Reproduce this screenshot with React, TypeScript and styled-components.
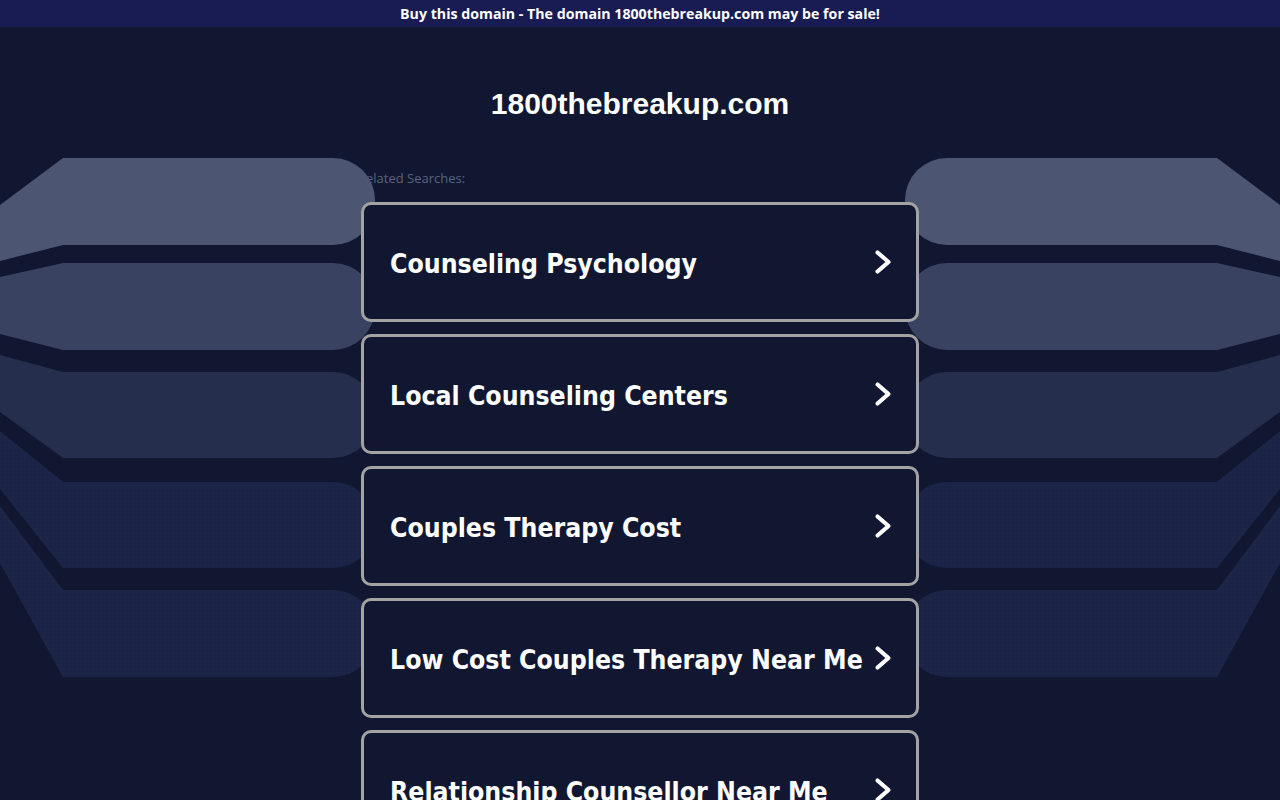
import React from 'react';
import styled, { createGlobalStyle } from 'styled-components';

const searches = [
  'Counseling Psychology',
  'Local Counseling Centers',
  'Couples Therapy Cost',
  'Low Cost Couples Therapy Near Me',
  'Relationship Counsellor Near Me',
];

type Band = {
  top: number;
  bottom: number;
  tipTop: number;
  tipBottom: number;
  fill: string;
};

const bands: Band[] = [
  { top: 158, bottom: 245, tipTop: 205, tipBottom: 261, fill: '#4c5673' },
  { top: 263, bottom: 350, tipTop: 277, tipBottom: 334, fill: '#3a4261' },
  { top: 372, bottom: 458, tipTop: 355, tipBottom: 412, fill: '#262e4d' },
  { top: 482, bottom: 568, tipTop: 431, tipBottom: 489, fill: 'url(#dots)' },
  { top: 590, bottom: 677, tipTop: 506, tipBottom: 563, fill: 'url(#dots)' },
];

const bandPath = (b: Band): string => {
  const r = 42;
  const end = 375;
  return [
    `M0 ${b.tipTop}`,
    `L63 ${b.top}`,
    `L${end - r} ${b.top}`,
    `A${r} ${r} 0 0 1 ${end} ${b.top + r}`,
    `L${end} ${b.bottom - r}`,
    `A${r} ${r} 0 0 1 ${end - r} ${b.bottom}`,
    `L63 ${b.bottom}`,
    `L0 ${b.tipBottom}`,
    'Z',
  ].join(' ');
};

const Bands: React.FC = () => (
  <>
    {bands.map((b, i) => (
      // eslint-disable-next-line react/no-array-index-key
      <path key={i} d={bandPath(b)} fill={b.fill} />
    ))}
  </>
);

const Chevron: React.FC = () => (
  <ChevronIcon viewBox="0 0 18 26" aria-hidden="true">
    <path
      d="M3.5 3.5 L14.5 13 L3.5 22.5"
      fill="none"
      stroke="#ffffff"
      strokeWidth="4.2"
      strokeLinecap="round"
      strokeLinejoin="round"
    />
  </ChevronIcon>
);

const App: React.FC = () => {
  return (
    <StyledPage>
      <GlobalStyle />
      <Backdrop viewBox="0 0 1280 800" preserveAspectRatio="xMidYMin slice">
        <defs>
          <pattern id="dots" width="4" height="4" patternUnits="userSpaceOnUse">
            <rect width="4" height="4" fill="#1b2446" />
            <circle cx="1" cy="1" r="0.5" fill="#222c53" />
          </pattern>
        </defs>
        <Bands />
        <g transform="translate(1280 0) scale(-1 1)">
          <Bands />
        </g>
      </Backdrop>
      <TopBar>Buy this domain - The domain 1800thebreakup.com may be for sale!</TopBar>
      <Main>
        <Title>1800thebreakup.com</Title>
        <Label>Related Searches:</Label>
        <CardList>
          {searches.map((s) => (
            <Card key={s} href="#">
              <CardText>{s}</CardText>
              <Chevron />
            </Card>
          ))}
        </CardList>
      </Main>
    </StyledPage>
  );
};
export default App;

const bg = '#111730';

const GlobalStyle = createGlobalStyle`
  html, body {
    margin: 0;
    padding: 0;
    background: ${bg};
  }
  body {
    font-family: "Liberation Sans", Arial, sans-serif;
    color: #ffffff;
  }
`;

const StyledPage = styled.div`
  position: relative;
  min-height: 800px;
  overflow: hidden;
`;

const Backdrop = styled.svg`
  position: absolute;
  top: 0;
  left: 0;
  width: 1280px;
  height: 800px;
  z-index: 1;
  pointer-events: none;
`;

const TopBar = styled.div`
  height: 27px;
  display: flex;
  align-items: center;
  justify-content: center;
  background: #181c53;
  font-family: "Open Sans", sans-serif;
  font-weight: 700;
  font-size: 14.2px;
  color: #ffffff;
`;

const Main = styled.main`
  width: 558px;
  margin: 0 auto;
  display: flex;
  flex-direction: column;
`;

const Title = styled.h1`
  margin: 61px 0 0;
  text-align: center;
  font-family: "Liberation Sans", Arial, sans-serif;
  font-weight: 700;
  font-size: 30px;
  line-height: 32px;
`;

const Label = styled.div`
  margin-top: 50px;
  margin-left: -3px;
  font-family: "Open Sans", sans-serif;
  font-size: 13px;
  line-height: 16px;
  color: #5a6380;
`;

const CardList = styled.div`
  margin-top: 16px;
  display: flex;
  flex-direction: column;
  gap: 12px;
  padding-bottom: 40px;
`;

const Card = styled.a`
  position: relative;
  z-index: 2;
  box-sizing: border-box;
  height: 120px;
  display: flex;
  align-items: center;
  gap: 10px;
  padding: 0 24px 0 26px;
  border: 3px solid #a3a3a3;
  border-radius: 10px;
  background: ${bg};
  color: #ffffff;
  text-decoration: none;
`;

const CardText = styled.span`
  flex: 1;
  padding-top: 3px;
  font-family: "DejaVu Sans Condensed", "DejaVu Sans", sans-serif;
  font-stretch: condensed;
  font-weight: 700;
  font-size: 26.4px;
  white-space: nowrap;
`;

const ChevronIcon = styled.svg`
  width: 18px;
  height: 26px;
  flex-shrink: 0;
`;
